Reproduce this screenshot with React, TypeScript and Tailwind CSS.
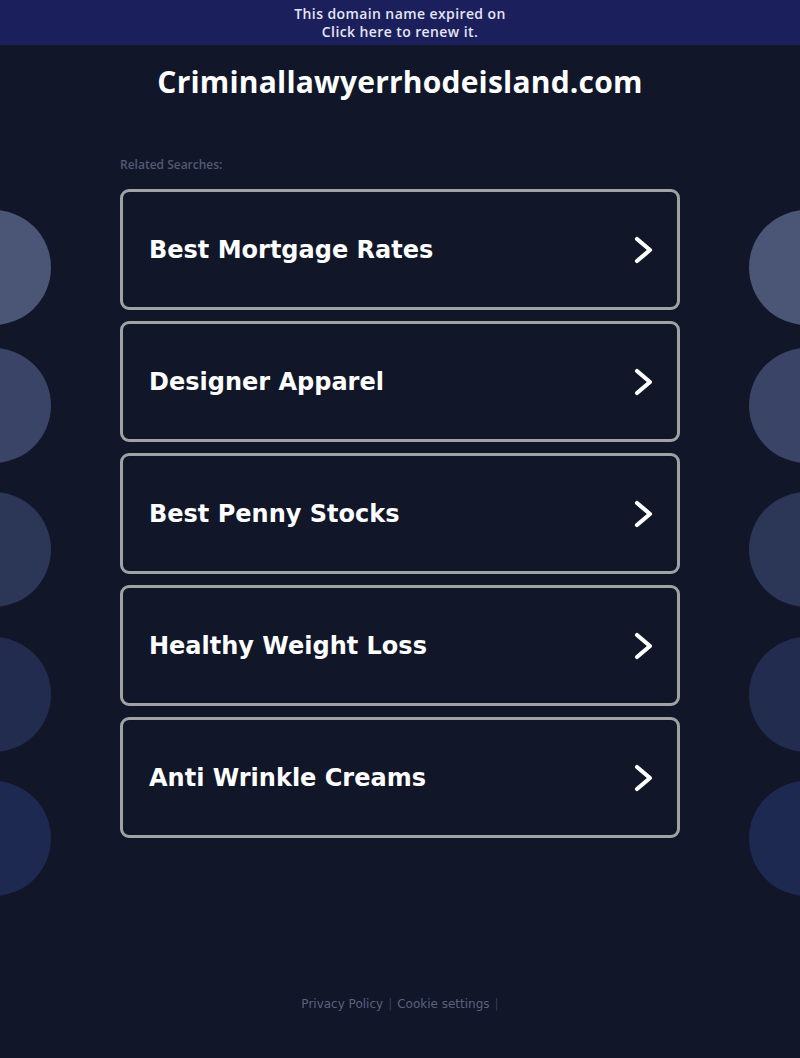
const searches = [
  'Best Mortgage Rates',
  'Designer Apparel',
  'Best Penny Stocks',
  'Healthy Weight Loss',
  'Anti Wrinkle Creams',
];

// side bubbles, top to bottom: lighter slate fading into navy
const bubbles = [
  { top: 'top-[210px]', color: 'bg-[#4b5575]' },
  { top: 'top-[348px]', color: 'bg-[#3a4466]' },
  { top: 'top-[492px]', color: 'bg-[#2c3657]' },
  { top: 'top-[637px]', color: 'bg-[#222c4f]' },
  { top: 'top-[781px]', color: 'bg-[#1d2950]' },
];

function Arrow() {
  return (
    <svg width="22" height="30" viewBox="0 0 22 30" fill="none" className="shrink-0">
      <polyline
        points="4,4 17,15 4,26"
        stroke="white"
        strokeWidth="4.2"
        strokeLinecap="round"
        strokeLinejoin="round"
      />
    </svg>
  );
}

export default function App() {
  return (
    <div className="relative min-h-[1058px] w-full overflow-hidden bg-[#111629] font-['DejaVu_Sans',sans-serif]">
      {/* Decorative bubbles on both edges */}
      {bubbles.map((b) => (
        <div key={b.top}>
          <div className={`absolute left-[-64px] h-[115px] w-[115px] rounded-full ${b.top} ${b.color}`} />
          <div className={`absolute right-[-64px] h-[115px] w-[115px] rounded-full ${b.top} ${b.color}`} />
        </div>
      ))}

      {/* Expiry banner */}
      <div className="relative flex h-[45px] flex-col items-center justify-center bg-[#1b1f5b] font-['Open_Sans',sans-serif] text-[14px] font-semibold leading-[18px] tracking-[0.4px] text-[#e3e5f5]">
        <span>This domain name expired on</span>
        <span>
          <a className="text-[#e3e5f5]">Click here</a> to renew it.
        </span>
      </div>

      <h1 className="relative mt-[17px] text-center font-['Open_Sans',sans-serif] text-[30px] font-bold leading-[40px] tracking-[0.2px] text-white">
        Criminallawyerrhodeisland.com
      </h1>

      <div className="relative mx-auto mt-[55px] w-[560px]">
        <p className="font-['Open_Sans',sans-serif] text-[12px] font-semibold leading-[16px] text-[#535a74]">
          Related Searches:
        </p>

        <div className="mt-[16px] flex flex-col gap-[11px]">
          {searches.map((s) => (
            <a
              key={s}
              className="flex h-[121px] items-center justify-between rounded-[9px] border-[3px] border-[#a0a2a6] pl-[26px] pr-[22px]"
            >
              <span className="text-[24px] font-bold leading-none text-white">{s}</span>
              <Arrow />
            </a>
          ))}
        </div>
      </div>

      {/* Footer links */}
      <div className="absolute bottom-[46px] left-0 right-0 flex justify-center gap-[5px] text-[12px] leading-[16px] text-[#5b627d]">
        <a>Privacy Policy</a>
        <span className="text-[#3a3f55]">|</span>
        <a>Cookie settings</a>
        <span className="text-[#3a3f55]">|</span>
      </div>
    </div>
  );
}
